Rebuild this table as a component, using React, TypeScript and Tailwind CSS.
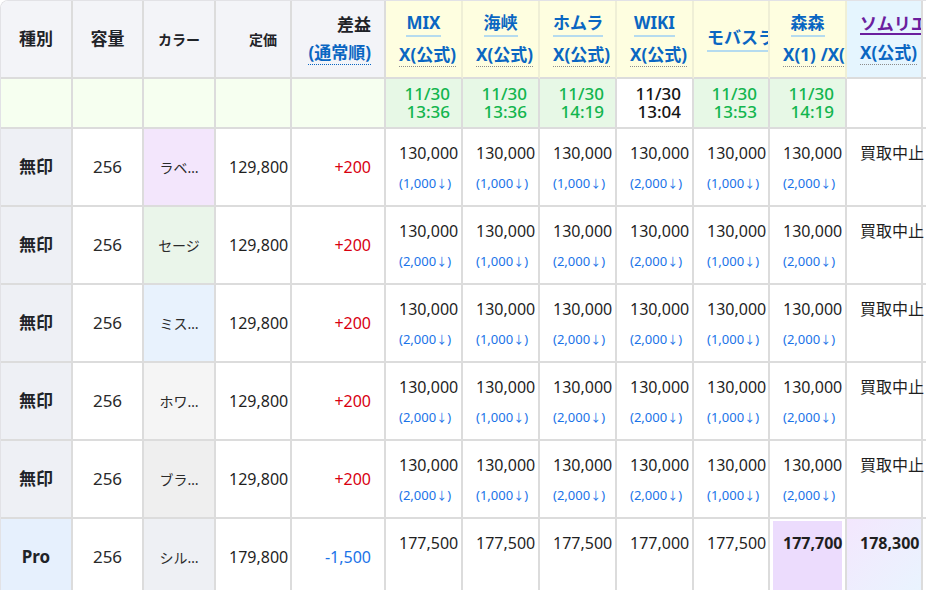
import React from "react"

const grid =
  "grid grid-cols-[72px_71px_72px_76px_94px_77px_77px_77px_77px_76px_77px_76px_200px]"
const cell = "border-r-2 border-b-2 border-[#dcdcdc]"

function TopLink({ children }: { children: React.ReactNode }) {
  return (
    <span className="block whitespace-nowrap text-[17px] leading-[22px] font-bold text-[#0a66c2] border-b-2 border-[#b5dbef] pb-px">
      {children}
    </span>
  )
}

function SubLink({ children }: { children: React.ReactNode }) {
  return (
    <span className="block whitespace-nowrap text-[17px] leading-[22px] font-bold text-[#0a66c2] border-b border-dotted border-[#8c8c8c]">
      {children}
    </span>
  )
}

const shops = [
  { name: "MIX", green: true, date: "11/30", time: "13:36" },
  { name: "海峡", green: true, date: "11/30", time: "13:36" },
  { name: "ホムラ", green: true, date: "11/30", time: "14:19" },
  { name: "WIKI", green: false, date: "11/30", time: "13:04" },
  { name: "モバスラ", green: true, date: "11/30", time: "13:53" },
  { name: "森森", green: true, date: "11/30", time: "14:19" },
]

const rows = [
  {
    color: "ラベ…",
    colorBg: "bg-[#f3e6fc]",
    drops: ["1,000", "1,000", "1,000", "2,000", "1,000", "2,000"],
  },
  {
    color: "セージ",
    colorBg: "bg-[#eaf5ea]",
    drops: ["2,000", "1,000", "2,000", "2,000", "1,000", "2,000"],
  },
  {
    color: "ミス…",
    colorBg: "bg-[#e8f2fd]",
    drops: ["2,000", "1,000", "2,000", "2,000", "1,000", "2,000"],
  },
  {
    color: "ホワ…",
    colorBg: "bg-[#f5f5f5]",
    drops: ["2,000", "1,000", "2,000", "2,000", "1,000", "2,000"],
  },
  {
    color: "ブラ…",
    colorBg: "bg-[#efefef]",
    drops: ["2,000", "1,000", "2,000", "2,000", "1,000", "2,000"],
  },
]

function PriceCell({
  value,
  drop,
  className = "",
  bold = false,
}: {
  value: string
  drop?: string
  className?: string
  bold?: boolean
}) {
  return (
    <div className={`${cell} ${className} flex flex-col justify-center px-[13px] whitespace-nowrap`}>
      <div className={`text-[16px] leading-[24px] text-[#1f1f1f] ${bold ? "font-bold" : ""}`}>{value}</div>
      <div className="mt-[8px] h-[20px] text-[13px] leading-[20px] text-[#1a73e8]">
        {drop ? (
          <>
            ({drop}
            <span className="text-[11px]">↓</span>)
          </>
        ) : (
          ""
        )}
      </div>
    </div>
  )
}

export default function App() {
  return (
    <div className="w-[926px] h-[590px] overflow-hidden bg-white font-['Noto_Sans','Noto_Sans_CJK_JP',sans-serif] text-[#1f2328]">
      <div className={`${grid} w-max border-l border-t border-[#e2e2e6] rounded-tl-lg overflow-hidden`}>
        {/* header */}
        <div className={`${cell} h-[78px] bg-[#f3f4f8] flex items-center justify-center text-[17px] font-bold`}>種別</div>
        <div className={`${cell} h-[78px] bg-[#f3f4f8] flex items-center justify-center text-[17px] font-bold`}>容量</div>
        <div className={`${cell} h-[78px] bg-[#f3f4f8] flex items-center justify-center text-[14px] font-bold`}>カラー</div>
        <div className={`${cell} h-[78px] bg-[#f3f4f8] flex items-center justify-end pr-[13px] text-[14px] font-bold`}>定価</div>
        <div className={`${cell} h-[78px] bg-[#f3f4f8] flex flex-col items-end justify-center pr-[13px]`}>
          <div className="text-[17px] leading-[22px] font-bold">差益</div>
          <div className="mt-[6px] text-[17px] leading-[22px] font-bold text-[#0a66c2] border-b border-dotted border-[#0a66c2]">(通常順)</div>
        </div>
        {shops.map((s) => (
          <div
            key={s.name}
            className={`${cell} border-r-[#efefd6] h-[78px] bg-[#fefee0] flex flex-col justify-center px-[13px] overflow-hidden`}
          >
            <div className="flex [justify-content:safe_center]">
              <TopLink>{s.name}</TopLink>
            </div>
            {s.name === "モバスラ" ? null : (
              <div className="mt-[7px] flex [justify-content:safe_center]">
                {s.name === "森森" ? (
                  <div className="flex gap-[5px]">
                    <SubLink>X(1)</SubLink>
                    <SubLink>/X(2)</SubLink>
                  </div>
                ) : (
                  <SubLink>X(公式)</SubLink>
                )}
              </div>
            )}
          </div>
        ))}
        <div className={`${cell} h-[78px] bg-[#e5f5fe] flex flex-col justify-center px-[13px] overflow-hidden`}>
          <div className="flex [justify-content:safe_center]">
            <span className="whitespace-nowrap text-[17px] leading-[22px] font-bold text-[#6b1f9e] underline underline-offset-[3px] decoration-2">
              ソムリエ
            </span>
          </div>
          <div className="mt-[7px] flex [justify-content:safe_center]">
            <SubLink>X(公式)</SubLink>
          </div>
        </div>
        <div className={`${cell} h-[78px] bg-white`} />

        {/* timestamps */}
        {[0, 1, 2, 3, 4].map((i) => (
          <div key={i} className={`${cell} h-[50px] bg-[#f6fff0]`} />
        ))}
        {shops.map((s) => (
          <div
            key={s.name}
            className={`${cell} h-[50px] flex flex-col justify-center items-end pr-[11px] text-[17px] leading-[18px] font-medium ${
              s.green ? "bg-[#e7f8e6] text-[#12b54e]" : "bg-white text-[#151515]"
            }`}
          >
            <span>{s.date}</span>
            <span>{s.time}</span>
          </div>
        ))}
        <div className={`${cell} h-[50px] bg-white`} />
        <div className={`${cell} h-[50px] bg-white`} />

        {/* 無印 rows */}
        {rows.map((r, ri) => (
          <React.Fragment key={ri}>
            <div className={`${cell} h-[78px] bg-[#eef0f5] flex items-center justify-center text-[17px] font-bold`}>無印</div>
            <div className={`${cell} h-[78px] flex items-center justify-center text-[17px] text-[#2a2a2a]`}>256</div>
            <div className={`${cell} h-[78px] ${r.colorBg} flex items-center justify-center text-[14px] text-[#2a2a2a]`}>{r.color}</div>
            <div className={`${cell} h-[78px] flex items-center px-[13px] whitespace-nowrap text-[16px] text-[#1f1f1f]`}>129,800</div>
            <div className={`${cell} h-[78px] flex items-center justify-end pr-[13px] text-[16px] text-[#d80010]`}>+200</div>
            {r.drops.map((d, i) => (
              <PriceCell key={i} value="130,000" drop={d} className="h-[78px]" />
            ))}
            <PriceCell value="買取中止" className="h-[78px]" />
            <div className={`${cell} h-[78px]`} />
          </React.Fragment>
        ))}

        {/* Pro row */}
        <div className={`${cell} h-[78px] bg-[#e6f0fd] flex items-center justify-center text-[17px] font-bold`}>Pro</div>
        <div className={`${cell} h-[78px] flex items-center justify-center text-[17px] text-[#2a2a2a]`}>256</div>
        <div className={`${cell} h-[78px] bg-[#eef0f4] flex items-center justify-center text-[14px] text-[#2a2a2a]`}>シル…</div>
        <div className={`${cell} h-[78px] flex items-center px-[13px] whitespace-nowrap text-[16px] text-[#1f1f1f]`}>179,800</div>
        <div className={`${cell} h-[78px] flex items-center justify-end pr-[13px] text-[16px] text-[#1a73e8]`}>-1,500</div>
        {["177,500", "177,500", "177,500", "177,000", "177,500"].map((v, i) => (
          <PriceCell key={i} value={v} className="h-[78px]" />
        ))}
        <PriceCell value="177,700" bold className="h-[78px] bg-[#ecdcfd] shadow-[inset_3px_2px_0_0_white,inset_-3px_0_0_0_white]" />
        <PriceCell value="178,300" bold className="h-[78px] bg-gradient-to-br from-[#f3e7fd] to-[#e9f4fe]" />
        <div className={`${cell} h-[78px]`} />
      </div>
    </div>
  )
}
